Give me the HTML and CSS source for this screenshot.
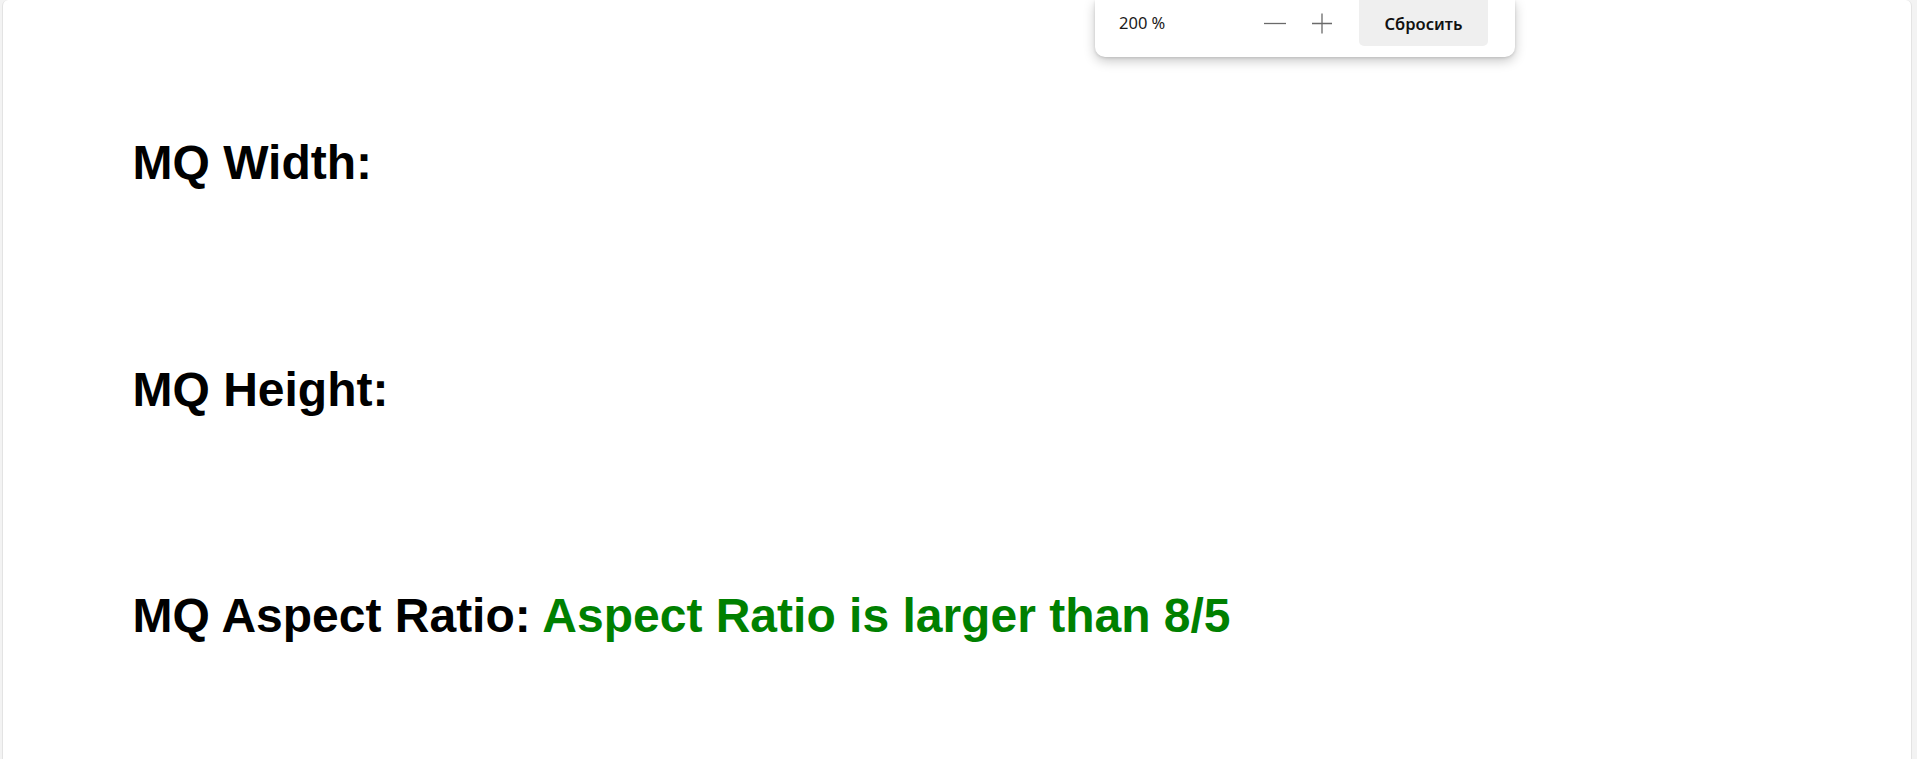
FILE: index.html
```html
<!DOCTYPE html>
<html lang="ru">
<head>
<meta charset="utf-8">
<title>MQ</title>
<link rel="stylesheet" href="styles.css">
</head>
<body>
<div class="frame">
  <main class="panel">
    <h2 class="row">MQ Width:</h2>
    <h2 class="row">MQ Height:</h2>
    <h2 class="row">MQ Aspect Ratio: <span class="ok">Aspect Ratio is larger than 8/5</span></h2>
  </main>
  <div class="zoom-pop">
    <span class="zoom-val">200 %</span>
    <button class="icon-btn" aria-label="minus">
      <svg width="22" height="22" viewBox="0 0 22 22"><path d="M0 11.5H22" stroke="#6a6a6a" stroke-width="1.3"/></svg>
    </button>
    <button class="icon-btn" aria-label="plus">
      <svg width="22" height="22" viewBox="0 0 22 22"><path d="M1 11.5H21M11 1.5V21.5" stroke="#6a6a6a" stroke-width="1.3"/></svg>
    </button>
    <button class="reset">Сбросить</button>
  </div>
</div>
</body>
</html>
```

FILE: styles.css
```css
html, body {
  margin: 0;
  padding: 0;
  height: 100%;
  overflow: hidden;
  background: #f3f3f3;
}

.frame {
  position: relative;
  height: 100%;
  padding: 0 5px 0 2px;
}

.panel {
  box-sizing: border-box;
  height: 100%;
  background: #ffffff;
  border: 1px solid #e3e3e3;
  border-top: none;
  border-bottom: none;
  border-radius: 6px 6px 0 0;
  padding: 135px 0 0 129.5px;
  display: flex;
  flex-direction: column;
  gap: 171.5px;
}

.row {
  margin: 0;
  font-family: "Liberation Sans", Arial, sans-serif;
  font-weight: bold;
  font-size: 48px;
  line-height: 55px;
  color: #000;
}

.ok {
  color: #008000;
}

.zoom-pop {
  position: absolute;
  top: 0;
  left: 1095px;
  width: 420px;
  height: 57px;
  box-sizing: border-box;
  background: #fff;
  border-radius: 0 0 10px 10px;
  box-shadow: 0 4px 12px rgba(0, 0, 0, 0.22), 0 1px 3px rgba(0, 0, 0, 0.12);
  display: flex;
  align-items: flex-start;
  padding: 0 27px 0 24px;
  font-family: "Noto Sans", "Open Sans", sans-serif;
}

.zoom-val {
  font-size: 16.5px;
  color: #1a1a1a;
  height: 46px;
  line-height: 46px;
  width: 146px;
}

.icon-btn {
  border: none;
  background: none;
  padding: 0;
  margin: 0;
  width: 22px;
  height: 46px;
  display: flex;
  align-items: center;
  justify-content: center;
}

.icon-btn + .icon-btn {
  margin-left: 25px;
}

.reset {
  margin-left: 26px;
  width: 130px;
  height: 46px;
  border: none;
  border-radius: 0 0 5px 5px;
  background: #efefef;
  font-family: "Noto Sans", "Open Sans", sans-serif;
  font-weight: 600;
  font-size: 16.5px;
  color: #111;
  padding: 0;
}
```
